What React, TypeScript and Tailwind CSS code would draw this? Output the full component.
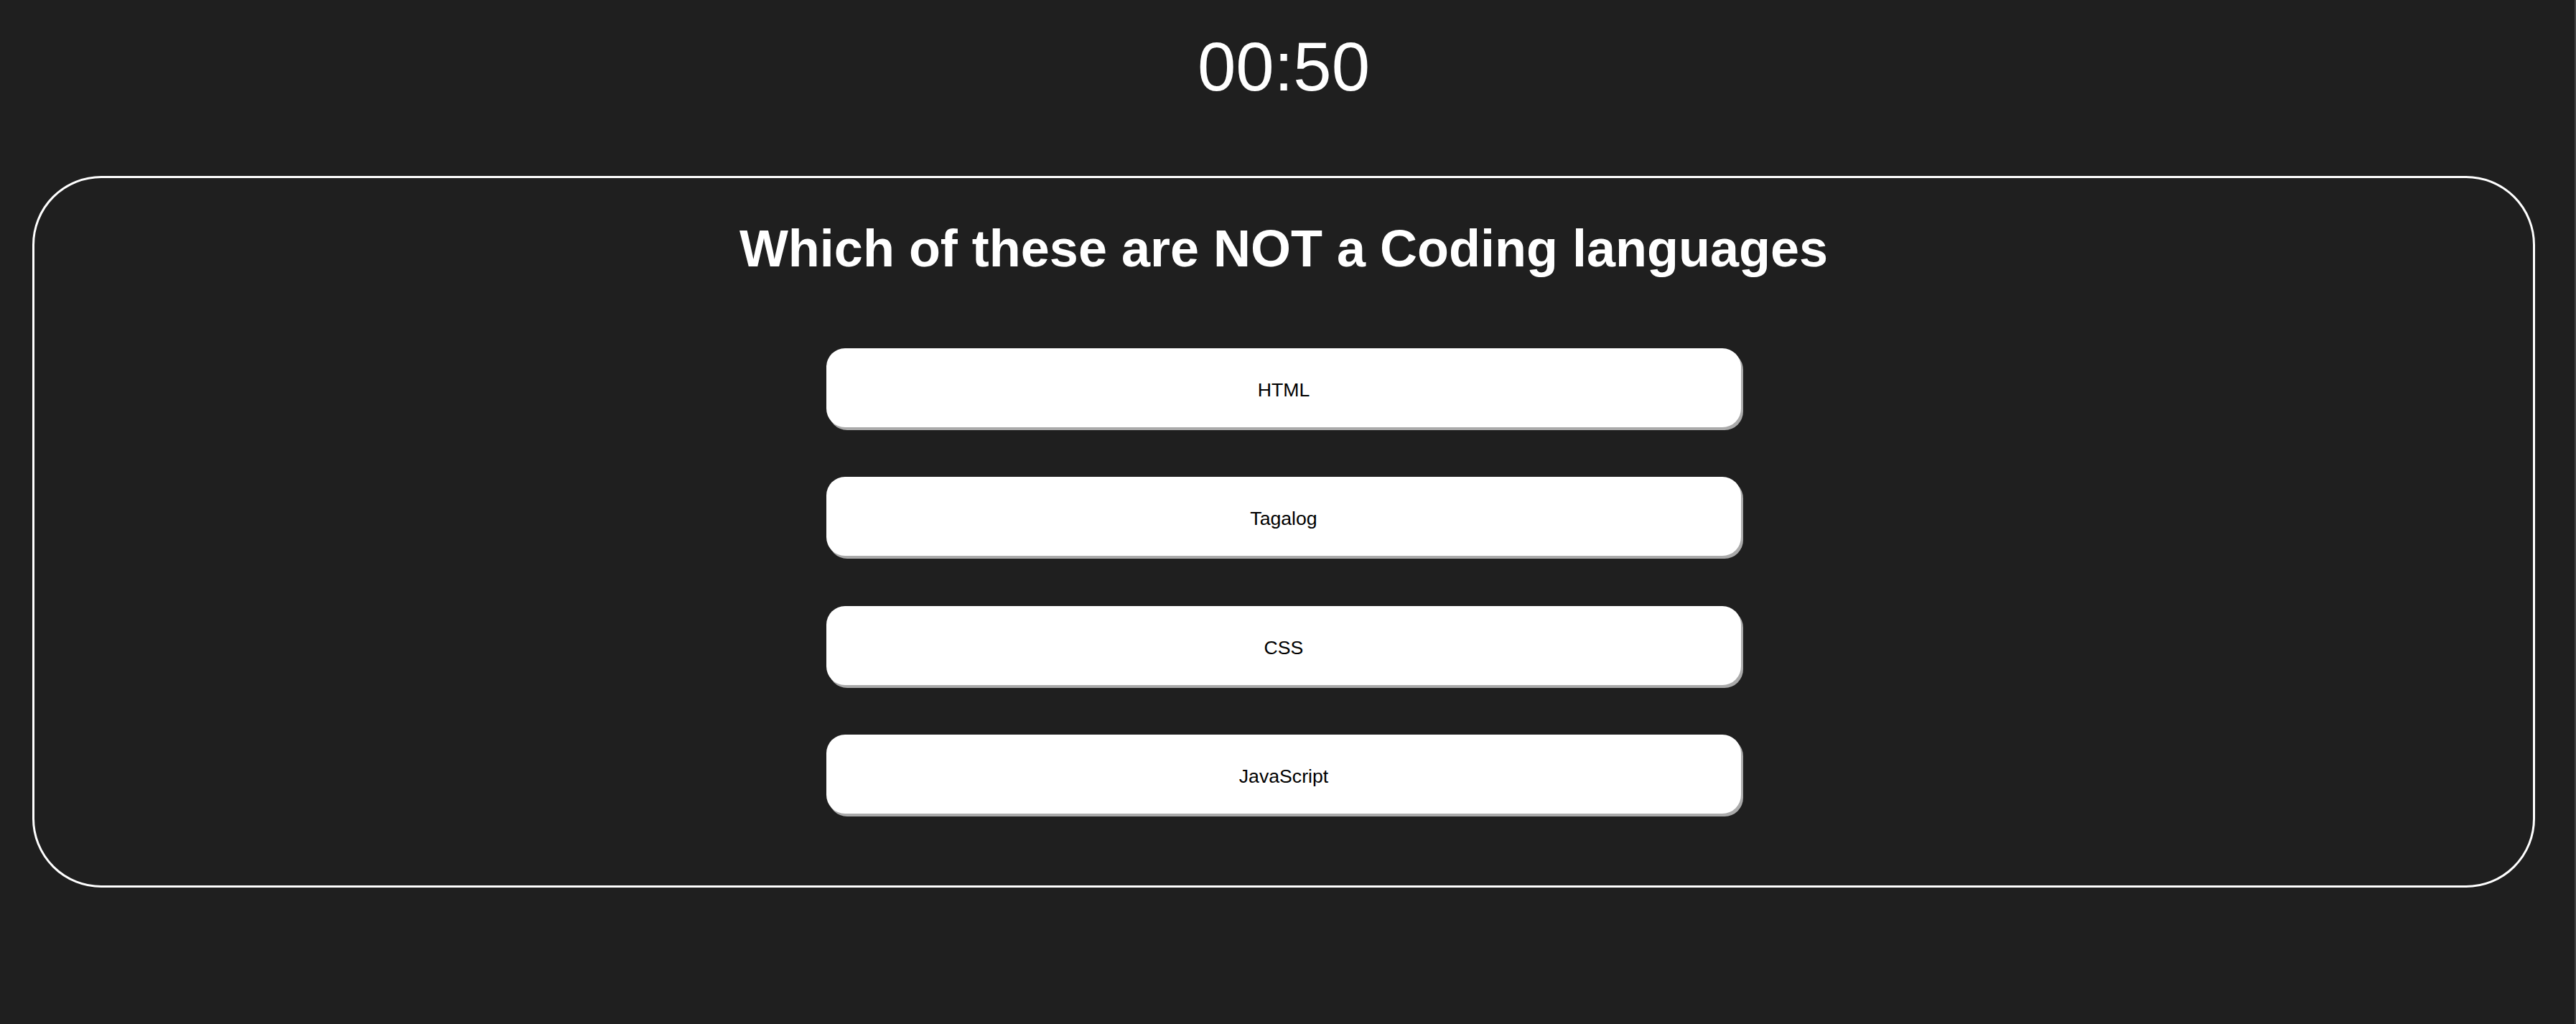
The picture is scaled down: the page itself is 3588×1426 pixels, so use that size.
import * as React from "react";

const options = ["HTML", "Tagalog", "CSS", "JavaScript"];

const OptionButton: React.FC<{ label: string }> = ({ label }) => {
  return (
    <button
      type="button"
      className="flex h-[110px] w-[1274px] items-center justify-center rounded-[26px] bg-white pt-[6px] text-[26.67px] text-black shadow-[3px_4px_0_0_#aaaaaa]"
    >
      {label}
    </button>
  );
};

export default function App() {
  return (
    <div className="min-h-screen w-full border-r-2 border-[#454545] bg-[#1f1f1f] pr-[10px] font-['Liberation_Sans',Arial,sans-serif]">
      <div className="flex flex-col items-center pb-[189px]">
        <div className="pt-[38px] text-[96px] leading-[110px] text-white">00:50</div>

        <div className="mx-[45px] mt-[97px] flex w-[calc(100%-90px)] flex-col items-center rounded-[96px] border-[3px] border-white pb-[100px] pt-[57px]">
          <h2 className="text-[72px] font-bold leading-[83px] text-white">
            Which of these are NOT a Coding languages
          </h2>
          <div className="mt-[97px] flex flex-col items-center gap-[69.33px]">
            {options.map((opt) => (
              <OptionButton key={opt} label={opt} />
            ))}
          </div>
        </div>
      </div>
    </div>
  );
}
